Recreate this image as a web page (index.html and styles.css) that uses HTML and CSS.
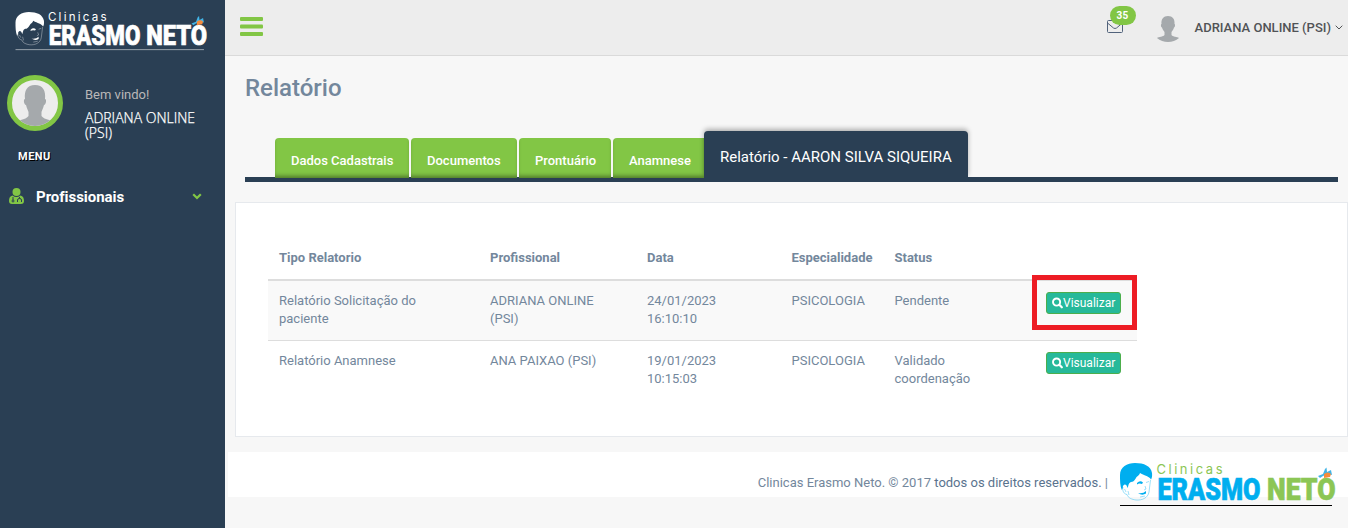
FILE: index.html
```html
<!DOCTYPE html>
<html lang="pt-BR">
<head>
<meta charset="utf-8">
<title>Relatório</title>
<link rel="stylesheet" href="styles.css">
</head>
<body>
<svg class="defs" width="0" height="0" aria-hidden="true">
  <symbol id="logo" viewBox="0 0 216 45" overflow="visible">
    <g class="logo-main">
      <path d="M1.800 28C0 24 0 18 0 13C0 5 7 1 15 1C24 1 31 4 32 11C32.300 14 32 16 31 17.500C29 14 25 14 20 11C19 14 17 14 16 16C14 19 13 20 11 20C8 21 8.500 25 7.500 26C6.500 20.500 2.500 22 2.800 26Z"/>
      <path class="logo-line" d="M3 25C2 29 4 32 7 32.500C8 36 12 37.500 16 38C22 38.500 28 36 29 30L30.500 18M4.500 27L6 30M26 20.500L29 19.500M25 24L26 27L24 28M20 35L25 34M8 29L9 33"/>
      <path d="M18 31Q23 32 26 29L26 31.500Q22 34 18 31ZM17 21Q20 18 23 20.500L22 22Q19 21 17 22.500Z"/>
      <text class="logo-word" x="37.500" y="38.200" textLength="103" lengthAdjust="spacingAndGlyphs">ERASMO</text>
    </g>
    <text class="logo-word logo-alt" x="147" y="38.200" textLength="68.500" lengthAdjust="spacingAndGlyphs">NETO</text>
    <text class="logo-small logo-alt" x="36.500" y="11.500" textLength="66" lengthAdjust="spacing">Clinicas</text>
    <path fill="#42b4e6" d="M198 14L203 12L205 7L206.500 5.500L207 10L211 8L212 13L208 12L203 14L200 16Z"/>
    <path fill="#f58b3c" d="M204 12Q208 9 211 12L210 15L204 16Z"/>
    <rect class="logo-rule" x="0" y="43" width="212" height="1"/>
  </symbol>
  <symbol id="person" viewBox="0 0 22 26">
    <path d="M11 0C15.500 0 18 3 17.500 8C18.500 8 18 11.500 17 11.500C16.500 14 15 15 14.500 16V19C16 21 20 20.500 22 22C19 24.500 15 26 11 26S3 24.500 0 22C2 20.500 6 21 7.500 19V16C7 15 5.500 14 5 11.500C4 11.500 3.500 8 4.500 8C4 3 6.500 0 11 0Z"/>
  </symbol>
  <symbol id="search" viewBox="0 0 12 12">
    <circle cx="5" cy="5" r="3.900" fill="none" stroke="#fff" stroke-width="2.100"/>
    <path d="M8 8L10.700 10.700" stroke="#fff" stroke-width="2.400" stroke-linecap="round"/>
  </symbol>
</svg>
<div class="app">
  <aside class="sidebar">
    <svg class="logo logo-side"><use href="#logo"/></svg>
    <div class="profile">
      <div class="avatar">
        <svg viewBox="0 0 46 46"><path d="M23 5C31 5 34 11 33 19C35 19 34 25 32 25C31 29 30 30 29.500 32V36C32 40 42 40 46 44V46H0V44C4 40 14 40 16.500 36V32C16 30 15 29 14 25C12 25 11 19 13 19C12 11 15 5 23 5Z"/></svg>
      </div>
      <div class="profile-info">
        <span class="welcome">Bem vindo!</span>
        <h2 class="profile-name">ADRIANA ONLINE (PSI)</h2>
      </div>
    </div>
    <h3 class="menu-label">MENU</h3>
    <a class="menu-item">
      <svg class="menu-icon" viewBox="0 0 15 16"><circle cx="7.500" cy="4" r="4"/><path d="M3.500 7.500C1 8 0 10 0 13C0 15 1 16 3 16H12C14 16 15 15 15 13C15 10 14 8 11.500 7.500Q7.500 10.500 3.500 7.500Z"/><path class="menu-icon-line" d="M4 9V12M10.500 9V10.500M8.500 14V12Q8.500 10.500 10.500 10.500T12.500 12V14"/><circle class="menu-icon-line" cx="4" cy="13" r="1"/></svg>
      <span>Profissionais</span>
      <svg class="menu-chevron" viewBox="0 0 10 7"><path d="M1.200 1.200L5 5L8.800 1.200"/></svg>
    </a>
  </aside>
  <div class="main">
    <header class="topbar">
      <svg class="burger" viewBox="0 0 23 19"><rect width="23" height="4" rx="1"/><rect y="7.500" width="23" height="4" rx="1"/><rect y="15" width="23" height="4" rx="1"/></svg>
      <div class="topbar-right">
        <div class="mail">
          <svg viewBox="0 0 16 13"><rect x=".5" y=".5" width="15" height="12" rx="1"/><path d="M.5 3L6.500 8Q8 9 9.500 8L15.500 3"/></svg>
          <span class="badge">35</span>
        </div>
        <svg class="top-avatar"><use href="#person"/></svg>
        <span class="user-name">ADRIANA ONLINE (PSI)</span>
        <svg class="user-chevron" viewBox="0 0 8 5"><path d="M.7 .7L4 4L7.300 .7"/></svg>
      </div>
    </header>
    <h1 class="title">Relatório</h1>
    <nav class="tabs">
      <a class="tab tab-dados">Dados Cadastrais</a>
      <a class="tab tab-docs">Documentos</a>
      <a class="tab tab-pront">Prontuário</a>
      <a class="tab tab-anam">Anamnese</a>
      <a class="tab tab-active">Relatório - AARON SILVA SIQUEIRA</a>
    </nav>
    <section class="panel">
      <table class="table">
        <colgroup><col class="c-type"><col class="c-prof"><col class="c-date"><col class="c-esp"><col class="c-status"><col class="c-act"></colgroup>
        <thead>
          <tr><th>Tipo Relatorio</th><th>Profissional</th><th>Data</th><th>Especialidade</th><th>Status</th><th></th></tr>
        </thead>
        <tbody>
          <tr class="striped"><td>Relatório Solicitação do<br>paciente</td><td>ADRIANA ONLINE<br>(PSI)</td><td>24/01/2023<br>16:10:10</td><td>PSICOLOGIA</td><td>Pendente</td><td class="action"><a class="btn"><svg><use href="#search"/></svg>Visualizar</a><span class="highlight"></span></td></tr>
          <tr><td>Relatório Anamnese</td><td>ANA PAIXAO (PSI)</td><td>19/01/2023<br>10:15:03</td><td>PSICOLOGIA</td><td>Validado<br>coordenação</td><td class="action"><a class="btn"><svg><use href="#search"/></svg>Visualizar</a></td></tr>
        </tbody>
      </table>
    </section>
    <footer class="footer">
      <p class="copyright">Clinicas Erasmo Neto. © 2017 <a>todos os direitos reservados.</a> |</p>
      <svg class="logo logo-foot"><use href="#logo"/></svg>
    </footer>
  </div>
</div>
</body>
</html>
```
FILE: styles.css
```css
* { box-sizing: border-box; }
body {
  margin: 0;
  background: #f7f7f7;
  color: #73879c;
  font: 400 13px/18px Roboto, sans-serif;
}
h1, h2, h3, p { margin: 0; }
svg { display: block; flex: none; }
.defs { position: absolute; }
.app { display: flex; height: 528px; overflow: hidden; }

.logo { overflow: visible; }
.logo-main { fill: var(--logo-main); }
.logo-line { fill: none; stroke: var(--logo-main); stroke-width: .6; opacity: .65; }
.logo-alt { fill: var(--logo-alt); stroke: var(--logo-alt); }
.logo-word { font: 900 31px Roboto, sans-serif; stroke: var(--logo-main); stroke-width: .7; }
.logo-word.logo-alt { stroke: var(--logo-alt); }
.logo-small { font: 400 13px Inter, sans-serif; stroke-width: 0; }
.logo-rule { fill: var(--logo-rule); }

.sidebar { width: 225px; flex: none; background: #2a3f54; }
.logo-side {
  --logo-main: #fff;
  --logo-alt: #fff;
  --logo-rule: #a4adb7;
  width: 193px;
  height: 40px;
  margin: 11px 0 0 15px;
}
.profile { display: flex; gap: 22px; padding: 24px 0 0 7px; }
.avatar {
  width: 56px;
  height: 56px;
  flex: none;
  border: 5px solid #82c645;
  border-radius: 50%;
  background: #ededed;
  overflow: hidden;
}
.avatar svg { fill: #a5a9ac; }
.profile-info { padding-top: 11px; }
.welcome { display: block; color: #bab8b8; }
.profile-name {
  width: 125px;
  margin-top: 6px;
  color: #fff;
  font: 300 14px/15px "Open Sans", sans-serif;
  -webkit-text-stroke: .25px #fff;
}
.menu-label {
  margin: 8px 0 0 18px;
  color: #fff;
  font-size: 11px;
  font-weight: 700;
  letter-spacing: .5px;
  text-shadow: 1px 1px #000;
}
.menu-item {
  display: flex;
  align-items: center;
  height: 30px;
  margin: 15px 23px 0 9px;
  color: #fff;
  font-size: 15px;
  font-weight: 700;
}
.menu-item span { padding-top: 1px; letter-spacing: -.04px; }
.menu-icon { width: 15px; height: 16px; margin-right: 12px; fill: #82c645; }
.menu-icon-line { fill: none; stroke: #2a3f54; }
.menu-chevron { width: 10px; height: 7px; margin-left: auto; fill: none; stroke: #82c645; stroke-width: 2.2; }

.main { flex: 1; min-width: 0; }
.topbar {
  display: flex;
  justify-content: space-between;
  height: 56px;
  padding: 0 5px 0 15px;
  border-bottom: 1px solid #dadada;
  background: #ededed;
}
.burger { width: 23px; height: 19px; margin-top: 17px; fill: #82c645; }
.topbar-right { display: flex; align-items: center; height: 55px; }
.mail { position: relative; margin-right: 34px; }
.mail svg { width: 16px; height: 13px; margin-top: -3px; fill: none; stroke: #51627b; }
.badge {
  position: absolute;
  left: 3px;
  top: -17px;
  width: 26px;
  height: 19px;
  border-radius: 10px;
  background: #82c645;
  color: #fff;
  font-size: 10px;
  font-weight: 700;
  line-height: 19px;
  text-align: center;
  letter-spacing: .3px;
}
.top-avatar { width: 22px; height: 26px; fill: #a5a9ac; margin: 3px 16px 0 0; }
.user-name { color: #515356; font-weight: 500; }
.user-chevron { width: 8px; height: 5px; margin-left: 4px; fill: none; stroke: #515356; }

.title { margin: 17px 0 0 20px; font-size: 24px; font-weight: 500; line-height: 30px; }
.tabs {
  display: flex;
  align-items: flex-end;
  height: 51px;
  margin: 28px 10px 0 20px;
  padding-left: 30px;
  border-bottom: 5px solid #2a3f54;
}
.tab {
  height: 40px;
  margin: 0 2px -1px 0;
  padding-left: 16px;
  border-radius: 4px 4px 0 0;
  background: #82c645;
  box-shadow: inset 0 -4px 4px -2px rgba(0, 0, 0, .4);
  color: #fff;
  font-weight: 500;
  line-height: 45px;
  white-space: nowrap;
}
.tab-dados { width: 134px; }
.tab-docs { width: 106px; }
.tab-pront { width: 92px; }
.tab-anam { width: 91px; margin-right: 0; border-radius: 4px 0 0 0; }
.tab-active {
  width: 264px;
  height: 46px;
  margin: 0;
  background: #2a3f54;
  box-shadow: 0 -2px 5px rgba(0, 0, 0, .3);
  font-size: 15px;
  font-weight: 400;
  line-height: 52px;
  clip-path: inset(-10px -10px 0 -10px);
}

.panel {
  height: 235px;
  margin: 20px 0 0 10px;
  padding: 34px 0 0 32px;
  border: 1px solid #e6e9ed;
  background: #fff;
}
.table { width: 869px; table-layout: fixed; border-spacing: 0; }
.c-type { width: 211px; }
.c-prof { width: 157px; }
.c-date { width: 144.5px; }
.c-esp { width: 103px; }
.c-status { width: 151.5px; }
.table th { height: 44px; padding: 0 0 0 11px; border-bottom: 2px solid #ddd; text-align: left; font-weight: 700; }
.table td { height: 59px; padding: 11px 0 0 11px; vertical-align: top; }
.striped td { background: #f9f9f9; border-bottom: 1px solid #ddd; height: 60px; }
.table .action { position: relative; }
.btn {
  display: flex;
  align-items: center;
  width: 75px;
  height: 22px;
  padding-left: 5px;
  border: 1px solid #4cae4c;
  border-radius: 3px;
  background: #26b99a;
  color: #fff;
  font-size: 12px;
}
.btn svg { width: 11px; height: 12px; }
.highlight { position: absolute; left: -3px; top: -6px; width: 105px; height: 55px; border: 5px solid #ed1c24; }

.footer {
  display: flex;
  justify-content: flex-end;
  height: 45px;
  margin: 15px 0 0 3px;
  padding-right: 12px;
  background: #fff;
}
.copyright { margin: 22px 12px 0 0; white-space: nowrap; }
.copyright a { color: #5a738e; }
.logo-foot {
  --logo-main: #00aeef;
  --logo-alt: #8cc655;
  --logo-rule: #000;
  width: 216px;
  height: 45px;
  margin-top: 10px;
}
```
